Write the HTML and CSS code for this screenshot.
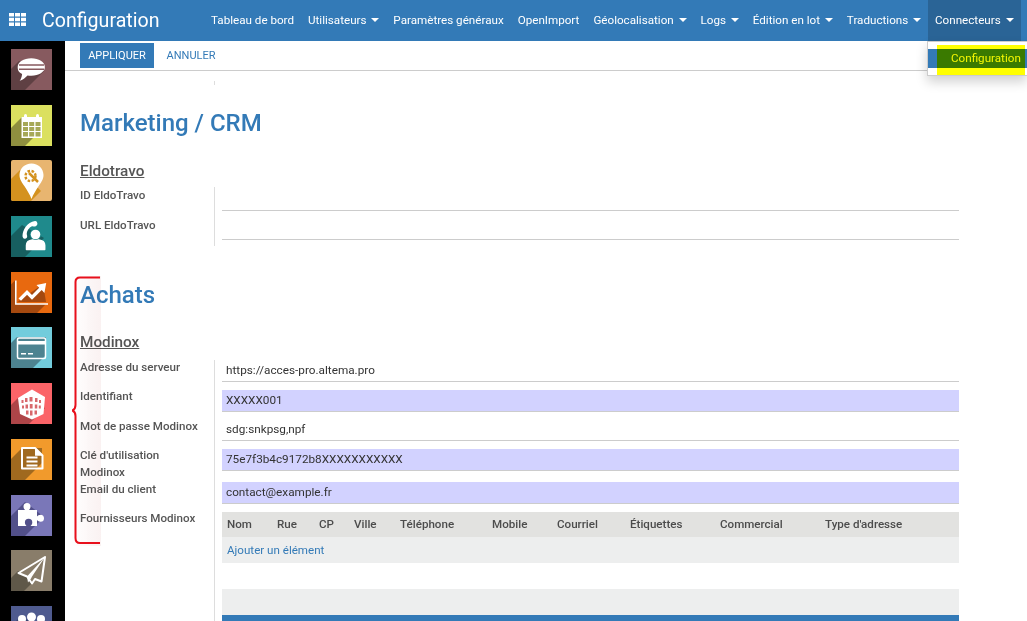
FILE: index.html
```html
<!DOCTYPE html>
<html lang="fr">
<head>
    <meta charset="UTF-8">
    <title>Configuration</title>
    <link rel="stylesheet" href="styles.css">
</head>
<body>
    <header class="navbar">
        <svg class="apps" viewBox="0 0 17 13"><path d="M0 0h5v3.600H0zM6 0h5v3.600H6zM12 0h5v3.600h-5zM0 4.700h5v3.600H0zM6 4.700h5v3.600H6zM12 4.700h5v3.600h-5zM0 9.400h5V13H0zM6 9.400h5V13H6zM12 9.400h5V13h-5z"/></svg>
        <div class="brand">Configuration</div>
        <nav class="menu">
            <a>Tableau de bord</a>
            <a class="caret">Utilisateurs</a>
            <a>Paramètres généraux</a>
            <a>OpenImport</a>
            <a class="caret">Géolocalisation</a>
            <a class="caret">Logs</a>
            <a class="caret">Édition en lot</a>
            <a class="caret">Traductions</a>
            <a class="caret open">Connecteurs</a>
        </nav>
    </header>

    <div class="dropdown">
        <div class="dropdown-item">
            <span class="highlight">Configuration</span>
        </div>
    </div>

    <div class="app">
        <aside class="sidebar">
            <!-- chat -->
            <svg class="tile" viewBox="0 0 41 41">
                <rect width="41" height="41" fill="#875a5f"/>
                <path d="M8 12 0 20v21h14l19-19z" fill="#5f4043"/>
                <path d="M20.300 9.300c7.500 0 13.600 3.900 13.600 8.700s-6 8.700-13.600 8.700c-1.300 0-2.600-.1-3.800-.3-1.800 2-5 4.800-7.900 5.400 1.200-1.500 2.200-3.700 2.500-6.900-3.700-1.600-4.400-4.100-4.400-6.900 0-4.800 6-8.700 13.600-8.700z" fill="#fff"/>
                <path d="M8 15.300h25v1.500H8zM8 19.500h25V21H8z" fill="#875a5f"/>
            </svg>
            <!-- calendar -->
            <svg class="tile" viewBox="0 0 41 41">
                <rect width="41" height="41" fill="#dbe05f"/>
                <path d="M11 12 0 23v18h14l17-17z" fill="#8f8f3f"/>
                <path d="M10.500 12h20.500v21H10.500z" fill="#fff"/>
                <path d="M12 17h5v4h-5zM18.200 17h5v4h-5zM24.500 17h5v4h-5zM12 22h5v4h-5zM18.200 22h5v4h-5zM24.500 22h5v4h-5zM12 27h5v4.500h-5zM18.200 27h5v4.500h-5zM24.500 27h5v4.500h-5z" fill="#a6a858"/>
                <rect x="13" y="9" width="3" height="6" rx="1.500" fill="#fff"/>
                <rect x="25" y="9" width="3" height="6" rx="1.500" fill="#fff"/>
            </svg>
            <!-- map pin -->
            <svg class="tile rounded" viewBox="0 0 41 41">
                <rect width="41" height="41" fill="#e8b570"/>
                <path d="M9 10 0 19v22h20l10-10z" fill="#d4921f"/>
                <path d="M20.500 3.500c6.800 0 12 5 12 11.500 0 4.500-2.800 8-5 11.300-2.600 3.900-5.300 8.200-7 12.700-1.700-4.500-4.400-8.800-7-12.700-2.200-3.300-5-6.800-5-11.300 0-6.500 5.200-11.500 12-11.500z" fill="#fff"/>
                <circle cx="19.500" cy="16" r="5" fill="none" stroke="#d4921f" stroke-width="2.500" stroke-dasharray="2.500 1.500"/>
                <path d="m18 13 9 9" stroke="#d4921f" stroke-width="2.500"/>
            </svg>
            <!-- phone and person -->
            <svg class="tile" viewBox="0 0 41 41">
                <rect width="41" height="41" fill="#1f8a8c"/>
                <path d="M11 9 0 20v21h14l19-19z" fill="#175f60"/>
                <path d="M24 5c-4 .5-7 2.500-9.500 6-2 2.800-3 6-3 9 0 .9.800 3 2.500 2.700 1.300-.2 2.200-1.200 2.200-2.500 0-1-.6-1.600-.4-3.300.3-2.400 2.500-5.500 4.700-6.500 1.400-.6 2.300.3 3.600 0 1.500-.4 2.400-1.500 2.300-2.900-.1-1.200-.9-2.700-2.400-2.500z" fill="#fff"/>
                <circle cx="24.500" cy="18.500" r="5.600" fill="#1f8a8c"/>
                <circle cx="24.500" cy="18.500" r="4.800" fill="#fff"/>
                <path d="M15.500 33.500v-4.200c0-3.300 3-5 6-5.300 2 1 4.200 1 6.200 0 3 .3 6 2 6 5.300v4.200z" fill="#fff" stroke="#fff" stroke-linejoin="round" stroke-width="1.500"/>
            </svg>
            <!-- chart -->
            <svg class="tile" viewBox="0 0 41 41">
                <rect width="41" height="41" fill="#e8690f"/>
                <path d="M4.500 8 0 12.500V41h26l9-9H6z" fill="#a5490f"/>
                <path d="M32 12 6.500 30H35z" fill="#a5490f"/>
                <path d="M4 8.500h1.600v22.800H37v1.500H4z" fill="#fff"/>
                <path d="m7.500 26.500 8.500-8.500 5 5 7.200-7.200-2.700-2.700 9.700-2-1.800 9.800-2.700-2.800-9.700 9.600-5-5-6 6z" fill="#fff"/>
            </svg>
            <!-- card -->
            <svg class="tile" viewBox="0 0 41 41">
                <rect width="41" height="41" fill="#72ccdc"/>
                <path d="M6 10 0 16v25h22l13-13V10z" fill="#4d8390"/>
                <rect x="6.500" y="11" width="28" height="20.500" rx="1.500" fill="none" stroke="#fff" stroke-width="1.500"/>
                <path d="M7 14h27v3.500H7zM10 26h5v1.500h-5zM17 26h5v1.500h-5z" fill="#fff"/>
            </svg>
            <!-- building -->
            <svg class="tile" viewBox="0 0 41 41">
                <rect width="41" height="41" fill="#fb6468"/>
                <path d="M7 15 0 22v19h18l16-16-14-6z" fill="#ae4548"/>
                <path d="m21 6.500 13 7.500-1.500 17-11.500 5.500L9 31 7 15z" fill="#fff"/>
                <path d="M10.500 17h2v3h-2zM14 15h2.500v4H14zM18.500 14h3v4.500h-3zM24 15h2.500v4H24zM28 17h2v3h-2zM11 22.500h2v3h-2zM14.500 21.500h2.500v4h-2.500zM18.800 21h2.800v4.500h-2.800zM23.800 21.500h2.500v4h-2.500zM27.800 22.500h2v3h-2zM15 27.500h2.500v4H15zM19 27.500h2.500v5H19zM23.500 27.500H26v4h-2.500z" fill="#d8686c"/>
            </svg>
            <!-- document -->
            <svg class="tile" viewBox="0 0 41 41">
                <rect width="41" height="41" fill="#f19a2c"/>
                <path d="M11 9 0 20v21h14l17-17V9z" fill="#a0691f"/>
                <path d="M11 9h13l7.500 7.500V29.500H11z" fill="none" stroke="#fff" stroke-width="2" stroke-linejoin="round"/>
                <path d="M24 8.500v8.300h8z" fill="#fff"/>
                <path d="M15.500 17.500h11v2h-11zM15.500 21.500h11v2h-11zM15.500 25.500h11v2h-11z" fill="#fff"/>
            </svg>
            <!-- puzzle -->
            <svg class="tile" viewBox="0 0 41 41">
                <rect width="41" height="41" fill="#7a77b8"/>
                <path d="M14 7 0 21v20h14l19-19-10-8z" fill="#52508a"/>
                <path transform="translate(0 -1)" d="M7 16h7c-.8-1-1.500-2-1.500-3.500a3.500 3.500 0 0 1 7 0c0 1.500-.7 2.500-1.500 3.500h8v6.500c1-1 2-1.800 3.500-1.800a3.500 3.500 0 0 1 0 7c-1.500 0-2.500-.7-3.500-1.700V32h-6.500c1-1 1.800-2 1.800-3.500a3.700 3.700 0 0 0-7.400 0c0 1.500.8 2.500 1.600 3.500H7z" fill="#fff"/>
            </svg>
            <!-- paper plane -->
            <svg class="tile" viewBox="0 0 41 41">
                <rect width="41" height="41" fill="#897d6a"/>
                <path d="M7 21 0 28v13h13l18-18z" fill="#5f5849"/>
                <path d="M34 7 7.500 23l8.500 3.500 5 7 3-4.500 6.500 2.500z" fill="#897d6a" stroke="#fff" stroke-width="2" stroke-linejoin="round"/>
                <path d="M34 7 16 26.500l1 6 3-4 1-2z" fill="#fff"/>
            </svg>
            <!-- people -->
            <svg class="tile" viewBox="0 0 41 41">
                <rect width="41" height="41" fill="#4f5b8f"/>
                <path d="M8 12 0 20v21h41V20z" fill="#3a4470"/>
                <circle cx="11" cy="13" r="4" fill="#fff"/>
                <circle cx="20.500" cy="11" r="4.500" fill="#fff"/>
                <circle cx="30" cy="13" r="4" fill="#fff"/>
            </svg>
        </aside>

        <main class="content">
            <div class="control-bar">
                <button class="btn-primary">APPLIQUER</button>
                <button class="btn-link">ANNULER</button>
            </div>

            <div class="sheet">
                <div class="tick"></div>

                <h1 class="first">Marketing / CRM</h1>
                <h2 class="eldo">Eldotravo</h2>
                <div class="group group-eldo">
                    <div class="row">
                        <label>ID EldoTravo</label>
                        <div class="cell"><div class="field"></div></div>
                    </div>
                    <div class="row">
                        <label>URL EldoTravo</label>
                        <div class="cell"><div class="field"></div></div>
                    </div>
                </div>

                <h1 class="second">Achats</h1>
                <h2 class="modi">Modinox</h2>
                <div class="group group-modi">
                    <div class="row">
                        <label>Adresse du serveur</label>
                        <div class="cell"><div class="field">https://acces-pro.altema.pro</div></div>
                    </div>
                    <div class="row">
                        <label>Identifiant</label>
                        <div class="cell"><div class="field required">XXXXX001</div></div>
                    </div>
                    <div class="row">
                        <label>Mot de passe Modinox</label>
                        <div class="cell"><div class="field">sdg:snkpsg,npf</div></div>
                    </div>
                    <div class="row">
                        <label>Clé d'utilisation Modinox</label>
                        <div class="cell"><div class="field required">75e7f3b4c9172b8XXXXXXXXXXX</div></div>
                    </div>
                    <div class="row">
                        <label>Email du client</label>
                        <div class="cell"><div class="field required">contact@example.fr</div></div>
                    </div>
                    <div class="row">
                        <label>Fournisseurs Modinox</label>
                        <div class="cell">
                            <table class="grid">
                                <thead>
                                    <tr>
                                        <th>Nom</th>
                                        <th>Rue</th>
                                        <th>CP</th>
                                        <th>Ville</th>
                                        <th>Téléphone</th>
                                        <th>Mobile</th>
                                        <th>Courriel</th>
                                        <th>Étiquettes</th>
                                        <th>Commercial</th>
                                        <th>Type d'adresse</th>
                                    </tr>
                                </thead>
                                <tbody>
                                    <tr><td colspan="10"><a>Ajouter un élément</a></td></tr>
                                </tbody>
                            </table>
                            <div class="grid-foot"></div>
                            <div class="blue-bar"></div>
                        </div>
                    </div>
                </div>
            </div>
        </main>
    </div>

    <!-- red brace drawn over the labels -->
    <div class="brace">
        <svg viewBox="0 0 30 270" width="30" height="270">
            <path d="M28 1.500H8Q3.500 1.500 3.500 6V129Q3.500 133 .5 134.500 3.500 136 3.500 140V262Q3.500 267 8 267H28" fill="none" stroke="#e8101c" stroke-width="2"/>
        </svg>
    </div>
</body>
</html>
```

FILE: styles.css
```css
* {
    box-sizing: border-box;
}

html, body {
    height: 100%;
}

body {
    margin: 0;
    overflow: hidden;
    font-family: Roboto, "Liberation Sans", sans-serif;
    font-size: 11.6px;
    color: #4c4c4c;
    background-color: #fff;
}

.navbar {
    display: flex;
    align-items: center;
    height: 41px;
    padding-left: 9px;
    background-color: #337ab7;
    color: #fff;
}

.apps {
    width: 17px;
    height: 13px;
    margin-top: -2px;
    fill: #fff;
}

.brand {
    width: 162px;
    margin-left: 16px;
    font-size: 19.6px;
}

.menu {
    display: flex;
    align-self: stretch;
    font-size: 11.65px;
    white-space: nowrap;
}

.menu a {
    display: flex;
    align-items: center;
    padding: 0 7px 2px;
}

.menu .caret::after {
    content: "";
    margin-left: 4.8px;
    border-top: 4px solid #fff;
    border-left: 4px solid transparent;
    border-right: 4px solid transparent;
}

.menu .open {
    background-color: #2a6496;
}

.dropdown {
    position: absolute;
    top: 41px;
    left: 927px;
    width: 100px;
    height: 35px;
    padding-top: 7px;
    background-color: #fff;
    border: 1px solid #ccc;
    border-right: 0;
    box-shadow: 0 6px 12px rgba(0, 0, 0, 0.18);
}

.dropdown-item {
    height: 19px;
    background-color: #337ab7;
}

.highlight {
    position: absolute;
    top: 3px;
    left: 9px;
    width: 88px;
    height: 30px;
    padding-left: 14px;
    font-size: 11.65px;
    line-height: 19px;
    color: #f4f700;
    background-color: #3a7a00;
    border-top: 4px solid #ffff00;
    border-bottom: 7px solid #ffff00;
}

.app {
    display: flex;
    height: 580px;
}

.sidebar {
    flex: none;
    display: flex;
    flex-direction: column;
    gap: 14.7px;
    width: 65px;
    padding: 8px 0 0 11px;
    background-color: #000;
    overflow: hidden;
}

.tile {
    flex: none;
    display: block;
    width: 41px;
    height: 41px;
}

.rounded {
    border-radius: 2px;
}

.content {
    flex: 1;
    min-width: 0;
}

.control-bar {
    display: flex;
    align-items: flex-start;
    height: 30px;
    padding: 2px 0 0 15px;
    border-bottom: 1px solid #ccc;
}

.control-bar button {
    height: 25px;
    border: 0;
    font-family: inherit;
    font-size: 11px;
    background: none;
}

.control-bar .btn-primary {
    width: 74px;
    color: #fff;
    background-color: #337ab7;
}

.btn-link {
    width: 62px;
    margin-left: 6px;
    color: #337ab7;
}

.sheet {
    padding-left: 15px;
}

.tick {
    width: 1px;
    height: 4px;
    margin: 10px 0 0 134px;
    background-color: #ddd;
}

h1 {
    margin: 0;
    font-size: 24px;
    font-weight: 500;
    line-height: 32px;
    color: #337ab7;
}

h1.first {
    margin-top: 22px;
}

h1.second {
    margin-top: 33px;
}

h2 {
    margin: 0;
    font-size: 15.3px;
    font-weight: 500;
    line-height: 20px;
    color: #555;
    text-decoration: underline;
}

h2.eldo {
    margin-top: 22px;
}

h2.modi {
    margin-top: 21px;
}

.group-eldo {
    margin-top: 6px;
}

.group-eldo .cell {
    padding-top: 1.5px;
}

.group-modi {
    margin-top: 8px;
}

.group {
    width: 879px;
}

.row {
    display: grid;
    grid-template-columns: 134px 1fr;
}

.row label {
    margin-top: -1.5px;
    padding: 0 10px 1px 0;
    font-weight: 500;
    line-height: 17px;
    color: #555;
}

.group-eldo .row label {
    margin-top: 0;
}

.cell {
    min-height: 29.5px;
    padding-left: 7px;
    border-left: 1px solid #ddd;
}

.field {
    height: 22px;
    padding: 0 4px;
    font-size: 11.75px;
    line-height: 21px;
    color: #333;
    border-bottom: 1px solid #ccc;
}

.required {
    background-color: #d2d2ff;
}

.grid {
    width: 100%;
    border-collapse: collapse;
    table-layout: fixed;
}

.grid th {
    height: 25px;
    padding: 0 0 0 5px;
    font-weight: 500;
    text-align: left;
    color: #4c4c4c;
    background-color: #e2e2e0;
}

.grid th:nth-child(1) { width: 50px; }
.grid th:nth-child(2) { width: 42px; }
.grid th:nth-child(3) { width: 35px; }
.grid th:nth-child(4) { width: 46px; }
.grid th:nth-child(5) { width: 92px; }
.grid th:nth-child(6) { width: 65px; }
.grid th:nth-child(7) { width: 73px; }
.grid th:nth-child(8) { width: 90px; }
.grid th:nth-child(9) { width: 105px; }

.grid td {
    height: 26px;
    padding: 0 0 0 5px;
    background-color: #edeeee;
}

.grid a {
    color: #337ab7;
}

.grid-foot {
    height: 26px;
    margin-top: 26px;
    background-color: #edeeee;
}

.blue-bar {
    height: 20px;
    background-color: #337ab7;
}

.brace {
    position: absolute;
    top: 276px;
    left: 72px;
    width: 29px;
    height: 270px;
    background: linear-gradient(to right, rgba(240, 215, 215, 0), rgba(240, 215, 215, 0.35));
    mix-blend-mode: multiply;
    overflow: hidden;
}

.brace svg {
    display: block;
}
```
